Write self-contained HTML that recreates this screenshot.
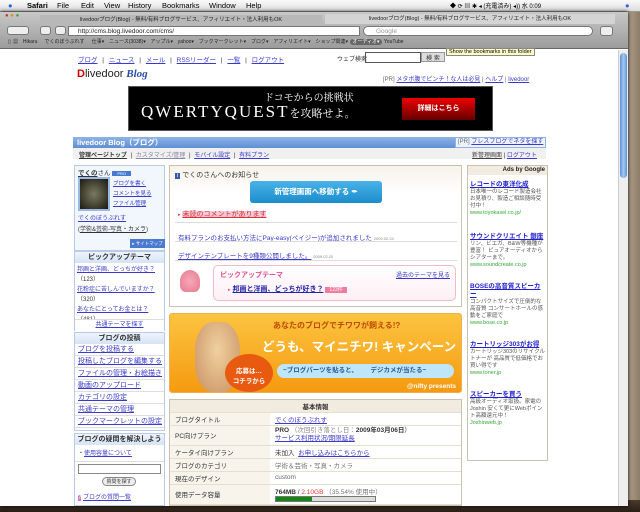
<!DOCTYPE html>
<html><head><meta charset="utf-8"><style>
*{margin:0;padding:0;box-sizing:border-box}
body{width:640px;height:512px;overflow:hidden;position:relative;background:#6b5a48;font-family:"Liberation Sans","Noto Sans CJK JP",sans-serif;font-size:7px;color:#333}
.a{position:absolute;white-space:nowrap}
a,.l{color:#3a3acc;text-decoration:underline}
.mb{left:0;top:0;width:640px;height:12px;background:linear-gradient(#fafafa,#dcdcdc);font-size:7.5px;color:#000;border-bottom:1px solid #999}
.mb span{position:absolute;top:1px;white-space:nowrap}
.win{left:0;top:12px;width:628px;height:494px;background:#fff;box-shadow:0 0 4px #000}
.chrome{left:0;top:12px;width:628px;height:37px;background:linear-gradient(#c8c8c8,#9c9c9c);border-bottom:1px solid #666}
.box{border:1px solid #c9c2b0}
.lb{border:1px solid #b8cbe8;background:#fff}
.lh{background:linear-gradient(#eef4fc,#d6e3f5);text-align:center;font-weight:bold;color:#333;height:11px;line-height:11px}
.row{border-bottom:1px solid #ddd;height:12px;line-height:12px;padding-left:3px}
table{border-collapse:collapse}
td{border-bottom:1px solid #e5dfd0;padding-left:5px;font-size:6.5px;white-space:nowrap}
.ad{margin-bottom:9px;white-space:normal}
.ad a{font-weight:bold;color:#22c;font-size:6.5px;line-height:8px}
</style></head><body>
<div class="a" style="left:600px;top:0;width:40px;height:512px;background:linear-gradient(90deg,#9e8d78,#c9bca9 50%,#8c7b66)"></div>
<div class="a" style="left:0;top:500px;width:640px;height:12px;background:linear-gradient(#4a3a2c,#2a1e16)"></div>
<div class="a mb"><span style="left:8px;color:#2a64d8">&#9679;</span><span style="left:27px;font-weight:bold">Safari</span><span style="left:57px">File</span><span style="left:81px">Edit</span><span style="left:104px">View</span><span style="left:128px">History</span><span style="left:162px">Bookmarks</span><span style="left:209px">Window</span><span style="left:246px">Help</span><span style="left:450px;font-size:6px">◆ ⟳ ▤ ✱ ◂ (充電済み) ◂)) 水 0:09</span><span style="left:625px;color:#2a64d8">●</span></div>
<div class="a win"></div>
<div class="a chrome">
 <div class="a" style="left:5px;top:1px;font-size:6px;color:#c33">● <span style="color:#c90">●</span> <span style="color:#3a3">●</span></div>
 <div class="a" style="left:40px;top:3px;width:282px;height:9px;font-size:5.5px;text-align:center;color:#222;background:#b8b8b8;overflow:hidden">livedoorブログ(Blog) - 無料/有料ブログサービス、アフィリエイト・法人利用もOK</div>
 <div class="a" style="left:325px;top:2px;width:290px;height:10px;font-size:5.5px;text-align:center;color:#222;background:#d4d4d4;overflow:hidden">livedoorブログ(Blog) - 無料/有料ブログサービス、アフィリエイト・法人利用もOK</div>
 <div class="a" style="left:7px;top:14px;width:22px;height:9px;background:#eee;border:1px solid #777;border-radius:3px"></div>
 <div class="a" style="left:40px;top:14px;width:11px;height:9px;background:#eee;border:1px solid #777;border-radius:3px"></div>
 <div class="a" style="left:55px;top:14px;width:11px;height:9px;background:#eee;border:1px solid #777;border-radius:3px"></div>
 <div class="a" style="left:68px;top:14px;width:292px;height:10px;background:#fff;border:1px solid #777;font-size:6.5px;padding-left:9px;line-height:9px;color:#222">http://cms.blog.livedoor.com/cms/</div>
 <div class="a" style="left:363px;top:14px;width:230px;height:10px;background:#fff;border:1px solid #777;border-radius:5px;font-size:6.5px;padding-left:12px;line-height:9px;color:#999">Google</div>
 <div class="a" style="left:600px;top:14px;width:13px;height:10px;background:#eee;border:1px solid #777;border-radius:3px"></div>
 <div class="a" style="left:8px;top:26px;font-size:5px;color:#222;word-spacing:1px">▯ ▦ &nbsp;Hikaru &nbsp; でくのぼうぶれす &nbsp; 仕事▾ &nbsp;ニュース(3038)▾ &nbsp;アップル▾ &nbsp;yahoo▾ &nbsp;ブックマークレット▾ &nbsp;ブログ▾ &nbsp;アフィリエイト▾ &nbsp;ショップ関連▾ <span style="background:#666;color:#fff;border-radius:3px;padding:0 2px">オーディオ▾</span> YouTube</div>
</div>
<div class="a" style="left:446px;top:48px;background:#ffffc8;border:1px solid #888;font-size:5.5px;padding:0 2px;color:#000">Show the bookmarks in this folder</div>
<div class="a" style="left:618px;top:50px;width:10px;height:456px;background:#eee;border-left:1px solid #ccc"><div style="margin:3px 1px;height:125px;border-radius:4px;background:linear-gradient(90deg,#5a8fd8,#a9c8f0,#5a8fd8)"></div></div>
<!-- page -->
<div class="a" style="left:78px;top:54px;font-size:6.5px;word-spacing:3px"><a>ブログ</a> | <a>ニュース</a> | <a>メール</a> | <a>RSSリーダー</a> | <a>一覧</a> | <a>ログアウト</a></div>
<div class="a" style="left:337px;top:54px;font-size:6px">ウェブ検索</div>
<div class="a" style="left:365px;top:52px;width:56px;height:11px;border:1px solid #555"></div>
<div class="a" style="left:421px;top:52px;width:24px;height:10px;background:#ddd;border:1px solid #999;font-size:6px;text-align:center">検 索</div>
<div class="a" style="left:77px;top:68px;font-size:11px;color:#222"><span style="color:#c00;font-weight:bold">D</span>livedoor<i style="color:#2a4fa8;font-weight:bold;font-family:'Liberation Serif'"> Blog</i></div>
<div class="a" style="left:383px;top:74px;font-size:6px;color:#666">[PR] <a>メタボ腹でピンチ！な人は必見</a> | <a>ヘルプ</a> | <a>livedoor</a></div>
<div class="a" style="left:128px;top:86px;width:365px;height:45px;background:#000;border:1px solid #555;color:#fff;font-family:'Liberation Serif','Noto Serif CJK SC',serif">
 <div class="a" style="left:135px;top:2px;font-size:10px">ドコモからの挑戦状</div>
 <div class="a" style="left:12px;top:15px;font-size:17px;letter-spacing:2px">QWERTYQUEST<span style="font-size:11px;letter-spacing:0">を攻略せよ。</span></div>
 <div class="a" style="left:273px;top:11px;width:73px;height:22px;background:linear-gradient(#e00,#600);font-size:7px;text-align:center;line-height:22px;font-family:'Liberation Sans','Noto Sans CJK JP',sans-serif;font-weight:bold">詳細はこちら</div>
</div>
<div class="a" style="left:73px;top:137px;width:473px;height:11px;background:linear-gradient(#8fb3e6,#5f8fd3);color:#fff;font-weight:bold;font-size:7.5px;padding-left:4px;line-height:11px">livedoor Blog（ブログ）</div>
<div class="a" style="left:455px;top:137px;width:91px;height:11px;background:#eef3fb;border:1px solid #8fb3e6;font-size:6px;line-height:9px;padding-left:2px;color:#666;overflow:hidden">[PR] <a>ブレスブログでネタを探す</a></div>
<div class="a" style="left:73px;top:148px;width:473px;height:11px;background:#f0f0f0"></div>
<div class="a" style="left:79px;top:150px;font-size:6px;word-spacing:2px"><b style="text-decoration:underline">管理ページトップ</b> | <a style="color:#88a">カスタマイズ/管理</a> | <a>モバイル設定</a> | <a>有料プラン</a></div>
<div class="a" style="left:472px;top:150px;font-size:6px"><a style="color:#444">新管理画面</a> | <a>ログアウト</a></div>
<!-- left col -->
<div class="a lb" style="left:74px;top:165px;width:91px;height:86px;background:#f2f7fd">
 <div class="a" style="left:3px;top:1px;font-size:6.5px"><b style="text-decoration:underline">でくの</b>さん <span style="background:#4a7ad0;color:#fff;font-size:4px;padding:0 5px">PRO</span></div>
 <div class="a" style="left:3px;top:11px;width:32px;height:34px;background:radial-gradient(#7a7a60,#1a1a10);border:2px solid #9bb9e6"></div>
 <div class="a" style="left:38px;top:13px;font-size:5.5px;line-height:10px"><a>ブログを書く</a><br><a>コメントを見る</a><br><a>ファイル管理</a></div>
 <div class="a" style="left:3px;top:48px;font-size:6px;line-height:11px"><a>でくのぼうぶれす</a><br>(<a style="color:#333">学術&amp;芸術-写真・カメラ</a>)</div>
 <div class="a" style="left:55px;top:73px;width:35px;height:9px;background:#4a7ad0;color:#fff;font-size:4.5px;line-height:9px;text-align:center">▸ サイトマップ</div>
</div>
<div class="a lb" style="left:74px;top:251px;width:91px;height:80px;white-space:normal">
 <div class="lh">ピックアップテーマ</div>
 <div style="padding:2px;font-size:6px;line-height:10px;white-space:normal"><a>邦画と洋画、どっちが好き？</a>（123）<br><a>花粉症に苦しんでいますか？</a>（320）<br><a>あなたにとってお金とは？</a>（481）</div>
 <div class="a" style="left:0;top:67px;width:89px;border-top:1px solid #ddd;text-align:center;font-size:6px;line-height:11px;background:#fff"><a>共通テーマを探す</a></div>
</div>
<div class="a lb" style="left:74px;top:332px;width:91px;height:99px">
 <div class="lh">ブログの投稿</div>
 <div class="row"><a>ブログを投稿する</a></div><div class="row"><a>投稿したブログを編集する</a></div><div class="row"><a>ファイルの管理・お絵描き</a></div><div class="row"><a>動画のアップロード</a></div><div class="row"><a>カテゴリの設定</a></div><div class="row"><a>共通テーマの管理</a></div><div class="row"><a>ブックマークレットの設定</a></div>
</div>
<div class="a lb" style="left:74px;top:433px;width:91px;height:73px">
 <div class="lh">ブログの疑問を解決しよう</div>
 <div style="padding:3px;font-size:6px">・<a>使用容量について</a></div>
 <div class="a" style="left:0;top:27px;width:89px;border-top:1px solid #ddd"></div>
 <div class="a" style="left:3px;top:30px;width:83px;height:10px;border:1px solid #888"></div>
 <div class="a" style="left:27px;top:43px;width:34px;height:9px;border:1px solid #888;border-radius:5px;background:#eee;font-size:5px;text-align:center;line-height:8px">質問を探す</div>
 <div class="a" style="left:3px;top:58px;font-size:6px"><span style="background:#d07ad0;color:#fff">?</span> <a>ブログの質問一覧</a></div>
</div>
<!-- center -->
<div class="a box" style="left:169px;top:165px;width:293px;height:142px;background:linear-gradient(#f7f2ea,#fff 20%)">
 <div class="a" style="left:5px;top:4px;font-size:7px"><span style="background:#3a5ca8;color:#fff;font-size:6px;padding:0 2px">i</span> でくのさんへのお知らせ</div>
 <div class="a" style="left:80px;top:15px;width:132px;height:22px;background:linear-gradient(#4ab3e8,#1b8ccc);border-radius:3px;color:#fff;font-weight:bold;font-size:7.5px;text-align:center;line-height:22px">新管理画面へ移動する ✒</div>
 <div class="a" style="left:8px;top:43px;font-size:7px;color:#d33"><span style="font-size:5px">▸</span> <span style="background:#f0c8d8;text-decoration:underline">未読のコメントがあります</span></div>
 <div class="a" style="left:5px;top:56px;width:282px;border-top:1px solid #ddd"></div>
 <div class="a" style="left:8px;top:66px;font-size:6.5px"><a>有料プランのお支払い方法にPay-easy(ペイジー)が追加されました</a> <span style="font-size:4px;color:#888">2009.02.24</span></div>
 <div class="a" style="left:5px;top:75px;width:282px;border-top:1px solid #ddd"></div>
 <div class="a" style="left:8px;top:84px;font-size:6.5px"><a>デザインテンプレートを9種類公開しました。</a> <span style="font-size:4px;color:#888">2009.02.20</span></div>
 <div class="a" style="left:5px;top:94px;width:282px;border-top:1px solid #ddd"></div>
 <div class="a" style="left:10px;top:104px;width:20px;height:22px;background:radial-gradient(#f8a8b8,#e67890);border-radius:50% 50% 30% 30%"></div>
 <div class="a" style="left:43px;top:99px;width:243px;height:36px;border:1px solid #f4b8cc;border-radius:5px;background:linear-gradient(#fff,#fdf0f5)">
  <div class="a" style="left:6px;top:4px;font-size:7px;color:#e0508a;font-weight:bold">ピックアップテーマ</div>
  <div class="a" style="right:5px;top:4px;font-size:6px"><a>過去のテーマを見る</a></div>
  <div class="a" style="left:14px;top:18px;font-size:7px"><span style="color:#e0508a;font-size:5px">▸</span> <a style="font-weight:bold;color:#22a">邦画と洋画、どっちが好き？</a> <span style="background:#f07aa0;color:#fff;font-size:5px;padding:0 4px">123件</span></div>
 </div>
</div>
<div class="a" style="left:169px;top:313px;width:293px;height:80px;border-radius:3px;background:linear-gradient(#fcc440,#f59a10);border:1px solid #f0b050;overflow:hidden">
 <div class="a" style="left:25px;top:8px;width:45px;height:70px;background:radial-gradient(ellipse at 50% 40%,#f0d0a0,#c89060);border-radius:40%"></div>
 <div class="a" style="left:55px;top:40px;width:48px;height:38px;background:#e85a10;border-radius:50%;color:#fff;font-size:6.5px;font-weight:bold;text-align:center;padding-top:11px">応募は…<br>コチラから</div>
 <div class="a" style="left:103px;top:6px;font-size:8px;color:#c04a00;font-weight:bold">あなたのブログでチワワが飼える!?</div>
 <div class="a" style="left:92px;top:22px;font-size:12.5px;color:#fff;font-weight:bold">どうも、マイニチワ! キャンペーン</div>
 <div class="a" style="left:107px;top:50px;width:177px;height:14px;background:#bfe6f8;border-radius:7px;color:#2a5a9a;font-size:6.5px;font-weight:bold;line-height:14px;padding-left:6px">~ブログパーツを貼ると、 &nbsp; &nbsp; &nbsp; デジカメが当たる~</div>
 <div class="a" style="right:5px;top:69px;font-size:6.5px;color:#fff;font-weight:bold">@nifty presents</div>
</div>
<div class="a box" style="left:169px;top:399px;width:293px;height:107px;background:#f8f4ec">
 <table style="width:291px">
  <tr><td colspan="2" style="text-align:center;font-weight:bold;height:12px;background:#f2ece0;padding:0">基本情報</td></tr>
  <tr style="height:13px"><td style="width:100px">ブログタイトル</td><td style="background:#fff"><a>でくのぼうぶれす</a></td></tr>
  <tr style="height:20px"><td>PC向けプラン</td><td style="background:#fff;line-height:8px"><b>PRO</b> <span style="color:#888">（次回引き落とし日：</span><b>2009年03月06日</b>）<br><a>サービス利用状況/期限延長</a></td></tr>
  <tr style="height:13px"><td>ケータイ向けプラン</td><td style="background:#fff">未加入 &nbsp;<a>お申し込みはこちらから</a></td></tr>
  <tr style="height:13px"><td>ブログのカテゴリ</td><td style="background:#fff;color:#777">学術＆芸術・写真・カメラ</td></tr>
  <tr style="height:13px"><td>現在のデザイン</td><td style="background:#fff;color:#666">custom</td></tr>
  <tr style="height:20px"><td>使用データ容量</td><td style="background:#fff"><b>764MB</b> / <span style="color:#e33">2.10GB</span> <span style="color:#777">（35.54% 使用中）</span><div style="width:101px;height:6px;border:1px solid #777;background:#ddd"><div style="width:36px;height:4px;background:#118811"></div></div></td></tr>
 </table>
</div>
<!-- ads -->
<div class="a box" style="left:467px;top:165px;width:81px;height:296px;font-size:5.5px;line-height:7px;color:#555;white-space:normal">
 <div style="background:#f2ece0;text-align:right;font-weight:bold;color:#222;padding:1px 2px;font-size:6px">Ads by Google</div>
 <div style="padding:6px 2px;white-space:normal">
 <div class="ad" style="margin-bottom:16px"><a>レコードの東洋化成</a><br>日本唯一のレコード製造会社 お見積り、製造ご相談随時受付中！<br><span style="color:#3a3">www.toyokasei.co.jp/</span></div>
 <div class="ad" style="margin-bottom:14px"><a>サウンドクリエイト 銀座</a><br>リン、ビエガ、B&amp;W等機種が豊富！ ピュアオーディオからシアターまで。<br><span style="color:#3a3">www.soundcreate.co.jp</span></div>
 <div class="ad" style="margin-bottom:14px"><a>BOSEの高音質スピーカー</a><br>コンパクトサイズで圧倒的な高音質 コンサートホールの感動をご家庭で<br><span style="color:#3a3">www.bose.co.jp</span></div>
 <div class="ad" style="margin-bottom:14px"><a>カートリッジ303がお得</a><br>カートリッジ303のリサイクルトナーが 高品質で低価格でお買い得です<br><span style="color:#3a3">www.toner.jp</span></div>
 <div class="ad"><a>スピーカーを買う</a><br>高級オーディオ取扱。家電のJoshin 安くて更にWebポイント高額還元中！<br><span style="color:#3a3">Joshinweb.jp</span></div>
 </div>
</div>
</body></html>
